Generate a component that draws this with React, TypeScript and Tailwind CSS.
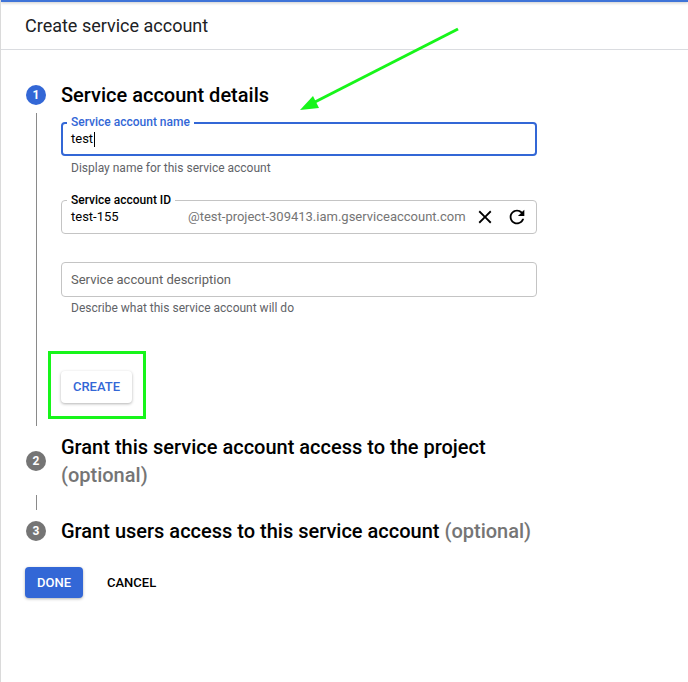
import React from "react";

function CloseIcon() {
  return (
    <svg width="22" height="22" viewBox="0 0 24 24" fill="#000">
      <path d="M19 6.41L17.59 5 12 10.59 6.41 5 5 6.41 10.59 12 5 17.59 6.41 19 12 13.41 17.59 19 19 17.59 13.41 12z" />
    </svg>
  );
}

function RefreshIcon() {
  return (
    <svg width="22" height="22" viewBox="0 0 24 24" fill="#000">
      <path d="M17.65 6.35C16.2 4.9 14.21 4 12 4c-4.42 0-7.99 3.58-7.99 8s3.57 8 7.99 8c3.73 0 6.84-2.55 7.73-6h-2.08c-.82 2.33-3.04 4-5.65 4-3.31 0-6-2.69-6-6s2.69-6 6-6c1.66 0 3.14.69 4.22 1.78L13 11h7V4l-2.35 2.35z" />
    </svg>
  );
}

function StepCircle({ n, active }: { n: number; active?: boolean }) {
  return (
    <div className="w-[21px] pl-[1px] shrink-0 flex">
      <div
        className={`w-[20px] h-[20px] rounded-full flex items-center justify-center text-white text-[12px] font-bold ${
          active ? "bg-[#3367d6]" : "bg-[#757575]"
        }`}
      >
        {n}
      </div>
    </div>
  );
}

export default function App() {
  return (
    <div
      className="relative w-[688px] min-h-[682px] bg-white border-l border-[#dadada] text-[#202124] overflow-hidden"
      style={{ fontFamily: "Roboto, 'Liberation Sans', sans-serif" }}
    >
      {/* top bar */}
      <div className="h-[2px] bg-[#3f74d8] shadow-[0_1px_3px_rgba(0,0,0,0.25)]" />
      <div className="h-[48px] border-b border-[#dadce0] flex items-center pl-[24px] text-[18px] text-[#202124]">
        Create service account
      </div>

      <div className="pl-[24px] pt-[31px]">
        {/* Step 1 */}
        <div className="flex items-center gap-[15px] h-[28px]">
          <StepCircle n={1} active />
          <div className="text-[20px] font-medium text-black">Service account details</div>
        </div>
        <div className="flex gap-[15px]">
          <div className="w-[21px] shrink-0 flex pl-[11px] pt-[4px]">
            <div className="w-px bg-[#8a8a8a]" />
          </div>
          <div className="w-[476px] pt-[13px] pb-[23px]">
            {/* name field */}
            <div className="relative h-[34px] border-2 border-[#3367d6] rounded-[4px] flex items-center pl-[8px]">
              <span className="absolute -top-[9px] left-[4px] bg-white px-[4px] text-[12px] leading-[14px] font-medium text-[#3367d6]">
                Service account name
              </span>
              <span className="text-[13px] text-black">test</span>
              <span className="inline-block w-px h-[15px] bg-black ml-[1px]" />
            </div>
            <div className="mt-[5px] pl-[10px] text-[12px] leading-[14px] text-[#5f6368]">
              Display name for this service account
            </div>

            {/* ID field */}
            <div className="relative mt-[25px] h-[34px] border border-[#c4c4c4] rounded-[4px] flex items-center pl-[9px] pr-[8px]">
              <span className="absolute -top-[8px] left-[5px] bg-white px-[4px] text-[12px] leading-[14px] font-medium text-black">
                Service account ID
              </span>
              <span className="text-[13px] text-black w-[117px]">test-155</span>
              <span className="text-[13px] text-[#757575]">@test-project-309413.iam.gserviceaccount.com</span>
              <div className="ml-auto flex items-center gap-[10px]">
                <CloseIcon />
                <RefreshIcon />
              </div>
            </div>

            {/* description */}
            <div className="mt-[28px] h-[35px] border border-[#c4c4c4] rounded-[4px] flex items-center pl-[9px]">
              <span className="text-[13px] text-[#616161]">Service account description</span>
            </div>
            <div className="mt-[4px] pl-[10px] text-[12px] leading-[14px] text-[#5f6368]">
              Describe what this service account will do
            </div>

            {/* create button */}
            <div className="relative mt-[56px] w-[71px]">
              <div className="absolute -left-[13px] -top-[20px] w-[98px] h-[68px] border-[3px] border-[#17f51a]" />
              <button className="relative w-[71px] h-[32px] bg-white rounded-[4px] shadow-[0_1px_3px_rgba(0,0,0,0.3)] text-[13px] font-medium text-[#3367d6]">
                CREATE
              </button>
            </div>
          </div>
        </div>

        {/* Step 2 */}
        <div className="mt-[7px] flex items-center gap-[15px]">
          <StepCircle n={2} />
          <div className="text-[20px] leading-[28px] font-medium text-black">
            Grant this service account access to the project
            <br />
            <span className="text-[#757575]">(optional)</span>
          </div>
        </div>
        <div className="w-[21px] flex pl-[11px] mt-[6px]">
          <div className="w-px h-[15px] bg-[#8a8a8a]" />
        </div>

        {/* Step 3 */}
        <div className="mt-[7px] flex items-center gap-[15px] h-[28px]">
          <StepCircle n={3} />
          <div className="text-[20px] font-medium text-black">
            Grant users access to this service account <span className="text-[#757575]">(optional)</span>
          </div>
        </div>

        {/* actions */}
        <div className="mt-[22px] flex items-center">
          <button className="w-[58px] h-[31px] rounded-[4px] bg-[#3367d6] text-white text-[13px] font-medium shadow-[0_1px_3px_rgba(0,0,0,0.3)]">
            DONE
          </button>
          <button className="ml-[24px] text-[13px] font-medium text-black">CANCEL</button>
        </div>
      </div>

      {/* annotation arrow */}
      <svg className="absolute left-0 top-0 pointer-events-none" width="688" height="682">
        <line x1="457" y1="29" x2="310" y2="104" stroke="#17f51a" strokeWidth="3" />
        <polygon points="299,110 312,96 318,108" fill="#17f51a" />
      </svg>
    </div>
  );
}
